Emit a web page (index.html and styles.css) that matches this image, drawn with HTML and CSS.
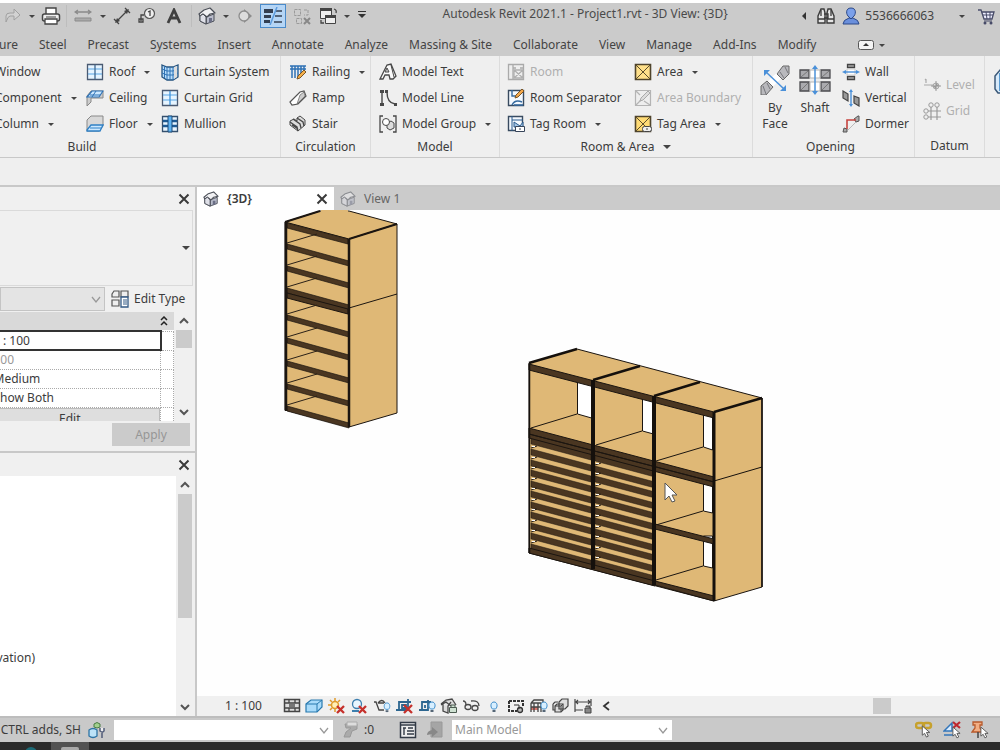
FILE: index.html
```html
<!DOCTYPE html>
<html lang="en">
<head>
<meta charset="utf-8">
<title>Autodesk Revit 2021.1 - Project1.rvt - 3D View: {3D}</title>
<link rel="stylesheet" href="styles.css">
</head>
<body>
<svg class="defs" aria-hidden="true">
  <defs>
    <symbol id="house" viewBox="0 0 18 18"><path d="M2 8v6l6 3V9zM8 10v7l8-3V7z" fill="#b9bccb" stroke="#4a4e57" stroke-linejoin="round"/><path d="m1 7 5-4 6-2 5 5-5 1-3 3-4-3-3 2z" fill="#f1f1f3" stroke="#4a4e57" stroke-width="1.200" stroke-linejoin="round"/><path d="m2 9 3-2 3 3v7l-6-3z" fill="#dfe0e8" stroke="#4a4e57"/><path d="M11 11h3v4l-3 1z" fill="#6b6f86"/></symbol>
    <symbol id="cross" viewBox="0 0 12 12"><path d="m1.500 1.500 9 9m0-9-9 9" stroke="#3a3a3a" stroke-width="2"/></symbol>
    <symbol id="up" viewBox="0 0 10 8"><path d="m1 6 4-4 4 4" fill="none" stroke="#555" stroke-width="2"/></symbol>
    <symbol id="down" viewBox="0 0 10 8"><path d="m1 2 4 4 4-4" fill="none" stroke="#555" stroke-width="2"/></symbol>
    <symbol id="thin-down" viewBox="0 0 12 8"><path d="m2 1 4 5 4-5" fill="none" stroke="#999" stroke-width="1.300"/></symbol>
    <symbol id="pointer" viewBox="0 0 10 14"><path d="M1 1v10l2.500-2 2 4 2-1-2-4H9z" fill="#fff" stroke="#555"/></symbol>
    <symbol id="bulb" viewBox="0 0 8 12"><path d="M2.500 8C0 6 .5 1 4 1s4 5 1.500 7z" fill="#d8efff" stroke="#3d8dcb"/><path d="M2.500 9h3v2h-3z" fill="#567"/></symbol>
    <g id="shelf"><path d="M0 0 62 17v5L0 5z" fill="#4a3621" stroke="#1b1510" stroke-width=".7"/><path d="m0-1 30-9" stroke="#2b2117" fill="none"/></g>
    <g id="slat"><path d="M0 0 60 16v6L0 6z" fill="#4a3621" stroke="#1b1510" stroke-width=".5"/><path d="m0-1 6-2" stroke="#2b2117" stroke-width="1.200"/><path d="M1-3h3v1H1z" fill="#fff"/></g>
  </defs>
</svg>

<div class="app">
  <div class="top-strip"></div>
  <header class="titlebar">
    <div class="quick-access">
      <button class="icon-btn" aria-label="Redo"><svg width="18" height="18" viewBox="0 0 18 18"><path d="M2 15V9q0-3 4-3h4V2l6 6-6 5V9H6q-2 0-4 6z" fill="#d2d2d2" stroke="#a0a0a0"/></svg></button>
      <button class="caret" aria-label="Redo list"></button>
      <button class="icon-btn" aria-label="Print"><svg width="20" height="18" viewBox="0 0 20 18"><path d="M5 7V1h10v6" fill="#fff" stroke="#444" stroke-width="1.400"/><rect x="1.500" y="7" width="17" height="7" rx="2" fill="#eee" stroke="#444" stroke-width="1.500"/><path d="M4 12h12v5H4z" fill="#fff" stroke="#444" stroke-width="1.300"/><path d="M5 10h10" stroke="#444"/></svg></button>
      <span class="divider"></span>
      <button class="icon-btn wide" aria-label="Measure"><svg width="18" height="16" viewBox="0 0 18 16"><path d="M2 4h14M4 2 1 4l3 2m10-4 3 2-3 2" fill="none" stroke="#8b8b8b" stroke-width="1.300"/><path d="M1 10h16v3H1z" fill="#aaa" stroke="#8b8b8b"/></svg></button>
      <button class="caret" aria-label="Measure list"></button>
      <button class="icon-btn" aria-label="Aligned dimension"><svg width="18" height="18" viewBox="0 0 18 18"><path d="m4 14 10-10M1 12l5 5M12 1l5 5" stroke="#444" stroke-width="1.300"/><path d="m2 16 2-5 3 3zm14-14-2 5-3-3z" fill="#444"/></svg></button>
      <button class="icon-btn" aria-label="Tag by category"><svg width="18" height="18" viewBox="0 0 18 18"><circle cx="11.500" cy="6.500" r="5" fill="#eee" stroke="#555" stroke-width="1.200"/><path d="M6 8H3v6M10 5l2-1v5M1 12h4v3H1z" fill="none" stroke="#444" stroke-width="1.300"/></svg></button>
      <button class="icon-btn text-tool" aria-label="Text"><svg width="16" height="16" viewBox="0 0 16 16"><path d="M2 15 8 2l6 13M4 10h8" fill="none" stroke="#404040" stroke-width="2.800"/></svg></button>
      <span class="divider"></span>
      <button class="icon-btn" aria-label="Default 3D view"><svg width="18" height="18"><use href="#house"/></svg></button>
      <button class="caret" aria-label="3D view list"></button>
      <button class="icon-btn" aria-label="Section"><svg width="16" height="16" viewBox="0 0 16 16"><path d="m7 1 8 7-8 7z" fill="#8d8d8d"/><circle cx="7" cy="8" r="5" fill="#ddd" stroke="#8d8d8d" stroke-width="1.300"/></svg></button>
      <button class="icon-btn active" aria-label="Thin lines"><svg width="20" height="18" viewBox="0 0 20 18"><path d="M1 2h9v4H1zm0 6h7v3H1zm0 5h6v3H1z" fill="#333f52"/><path d="M13 4h6M12 9h7m-8 6h8" stroke="#333f52" stroke-width="1.500"/><path d="M14 0 7 18" stroke="#5b9bdd" stroke-width="1.500"/></svg></button>
      <button class="icon-btn wide" aria-label="Close inactive views"><svg width="18" height="18" viewBox="0 0 18 18"><path d="M1.500 2.500h6v6h-6zm2 9h5v5h-5zM11 3h4v5h-4" fill="#ccc" stroke="#9a9a9a" stroke-dasharray="3 1"/><path d="m11 11 6 6m0-6-6 6" stroke="#888" stroke-width="2"/></svg></button>
      <button class="icon-btn" aria-label="Switch windows"><svg width="19" height="18" viewBox="0 0 19 18"><path d="M1.500 1.500h11v10h-11z" fill="#eee" stroke="#444"/><path d="M1 1h12v3H1z" fill="#444"/><path d="M6.500 8.500h10v8h-10z" fill="#eee" stroke="#444"/><path d="M6 8h11v3H6z" fill="#444"/><path d="M15 2q3 1 2 4M2 13v3h3" fill="none" stroke="#444" stroke-width="1.300"/></svg></button>
      <button class="caret" aria-label="Window list"></button>
      <button class="customize" aria-label="Customize Quick Access Toolbar"></button>
    </div>
    <h1 class="app-title">Autodesk Revit 2021.1 - Project1.rvt - 3D View: {3D}</h1>
    <div class="account">
      <button class="back" aria-label="Collapse search"></button>
      <button class="icon-btn" aria-label="Search"><svg width="18" height="18" viewBox="0 0 18 18"><path d="M1 16V9l3-7h3l1 4v10zm16 0V9l-3-7h-3l-1 4v10z" fill="#e5e5e5" stroke="#3b3b3b" stroke-width="1.400"/><path d="M7 7h4v4H7M1 12h7m2 0h7M4 3v6m10-6v6" fill="none" stroke="#3b3b3b" stroke-width="1.300"/></svg></button>
      <button class="user"><svg width="18" height="18" viewBox="0 0 18 18"><path d="M1 17q0-4 6-6h4q6 2 6 6z" fill="#6a8fdc" stroke="#2d4988"/><path d="M9 1c6 0 5 7 2 9l-2 2-2-2C4 8 3 1 9 1z" fill="#7ba0ea" stroke="#2d4988"/></svg><span>5536666063</span></button>
      <button class="caret" aria-label="Account menu"></button>
      <button class="icon-btn" aria-label="App store"><svg width="18" height="17" viewBox="0 0 18 17"><path d="M1 2h3l3 9h8l2-7H5" fill="#eef" stroke="#474b68" stroke-width="1.300"/><path d="M6 7h10M9 4l1 7m3-7v7M7 13h8" stroke="#474b68"/><circle cx="8" cy="15" r="1.500" fill="#474b68"/><circle cx="14" cy="15" r="1.500" fill="#474b68"/></svg></button>
    </div>
  </header>

  <nav class="ribbon-tabs">
    <a href="#" class="clipped">Structure</a><a href="#">Steel</a><a href="#">Precast</a><a href="#">Systems</a><a href="#">Insert</a><a href="#">Annotate</a><a href="#">Analyze</a><a href="#">Massing &amp; Site</a><a href="#">Collaborate</a><a href="#">View</a><a href="#">Manage</a><a href="#">Add-Ins</a><a href="#">Modify</a>
    <button class="ribbon-state" aria-label="Minimize ribbon"><svg width="16" height="10" viewBox="0 0 16 10"><rect x=".5" y=".5" width="15" height="9" rx="2" fill="#f4f4f4" stroke="#555"/><path d="m5 6 3-3 3 3z" fill="#333"/></svg><i class="tri"></i></button>
  </nav>

  <div class="ribbon">
    <section class="panel build">
      <div class="tools">
        <div class="col">
          <button class="tool"><span class="no-icon"></span>Window</button>
          <button class="tool"><span class="no-icon"></span>Component<i class="tri"></i></button>
          <button class="tool"><span class="no-icon"></span>Column<i class="tri"></i></button>
        </div>
        <div class="col">
          <button class="tool"><svg viewBox="0 0 18 18"><path d="M1.500 1.500h15v15h-15z" fill="#e6f4ff" stroke="#4a5a72" stroke-width="1.300"/><path d="M2 6h14M2 11h14" stroke="#58a5e4"/><path d="M9 2v14" stroke="#3e678f" stroke-width="1.300"/></svg>Roof<i class="tri"></i></button>
          <button class="tool"><svg viewBox="0 0 18 18"><path d="M1 7v10l4-4V9h12V2H5z" fill="#ccc" stroke="#888"/><path d="M1 8 6 2h11l-4 6z" fill="#cce8ff" stroke="#2f72b5" stroke-width="1.200"/><path d="M4 6h10M10 2 6 8" stroke="#2f72b5"/></svg>Ceiling</button>
          <button class="tool"><svg viewBox="0 0 18 18"><path d="M1 5 5 1h12v10l-4 5H1z" fill="#d8d8d8" stroke="#888"/><path d="m1 15 4-5h12l-3 6H1z" fill="#cce8ff" stroke="#2f80c5" stroke-width="1.300"/><path d="M4 13h11" stroke="#2f80c5"/></svg>Floor<i class="tri"></i></button>
        </div>
        <div class="col">
          <button class="tool"><svg viewBox="0 0 18 18"><path d="m1 2 5 2h6l5-2v12l-5 3H6l-5-3z" fill="#b8ddfa" stroke="#25537f" stroke-width="1.300"/><path d="M6 4v13m3-13v13m3-13v13M1 6l5 2h6l5-2M1 10l5 2h6l5-2M3.500 3v12" fill="none" stroke="#2f72b5"/><path d="m13 4 3-1v11l-3 2z" fill="#ddd"/></svg>Curtain System</button>
          <button class="tool"><svg viewBox="0 0 18 18"><path d="M1.500 1.500h15v15h-15z" fill="#e6f4ff" stroke="#4a5a72" stroke-width="1.300"/><path d="M2 6h14M2 11h14" stroke="#58a5e4"/><path d="M9 2v14" stroke="#3e91d8" stroke-width="1.300"/></svg>Curtain Grid</button>
          <button class="tool"><svg viewBox="0 0 18 18"><path d="M1.500 1.500h15v15h-15z" fill="#e6f4ff" stroke="#35506e" stroke-width="1.300"/><path d="M2 6h14m-14 5h14" stroke="#1d5a94" stroke-width="2.500"/><path d="M7 1h4v16H7z" fill="#5fb3f2" stroke="#1d4a78"/></svg>Mullion</button>
        </div>
      </div>
      <h2>Build</h2>
    </section>
    <section class="panel circulation">
      <div class="tools">
        <div class="col">
          <button class="tool"><svg viewBox="0 0 18 18"><path d="M1 3h16M1 6h16M3 3v12M6 3v12M9 3v11M12 3v8M15 3v5" stroke="#2f72b5" stroke-width="1.500"/><path d="m8 16 1-3 6-6 2 2-6 6z" fill="#f5b04c" stroke="#7a5526"/></svg>Railing<i class="tri"></i></button>
          <button class="tool"><svg viewBox="0 0 18 18"><path d="m1 13 10-10 4-1 2 5-8 8-6 1z" fill="#fff" stroke="#555" stroke-width="1.200"/><path d="m8 15 8-8-1-4-4 3z" fill="#ccc" stroke="#666" stroke-width=".7"/></svg>Ramp</button>
          <button class="tool"><svg viewBox="0 0 18 18"><path d="m1 6 4-2 3 2V3l3-2 5 4v5l-7 6-8-6z" fill="#ddd" stroke="#484848"/><path d="m1 7 7 5 1 4M4 4l7 5 1 4M8 3l6 4 1 4M3 10l6 4" fill="none" stroke="#484848" stroke-width="1.300"/></svg>Stair</button>
        </div>
      </div>
      <h2>Circulation</h2>
    </section>
    <section class="panel model">
      <div class="tools">
        <div class="col">
          <button class="tool"><svg viewBox="0 0 18 18"><path d="M1 16 8 2l4-1 5 12-3 3h-3l-1-4H6l-2 4z" fill="#fafafa" stroke="#484848" stroke-width="1.300"/><path d="m8 5 2 4H6zm4-3 3 12" fill="#ccc" stroke="#484848"/></svg>Model Text</button>
          <button class="tool"><svg viewBox="0 0 18 18"><path d="M3 3v12M8 3q0 11 8 12" fill="none" stroke="#484848" stroke-width="1.400"/><path d="M1 1h4v3H1zm0 13h4v3H1zM6 1h3v3H6zm9 13h3v3h-3z" fill="#484848"/></svg>Model Line</button>
          <button class="tool"><svg viewBox="0 0 18 18"><path d="M4 1H1v16h3M14 1h3v16h-3" fill="none" stroke="#484848" stroke-width="1.300"/><path d="m8 8 4-2 3 2v5l-4 2-3-2z" fill="#ddd" stroke="#484848"/><circle cx="7" cy="7" r="3.500" fill="#fff" stroke="#484848"/></svg>Model Group<i class="tri"></i></button>
        </div>
      </div>
      <h2>Model</h2>
    </section>
    <section class="panel room">
      <div class="tools">
        <div class="col">
          <button class="tool" disabled><svg viewBox="0 0 18 18"><path d="M1.500 1.500h15v15h-15zM6 2v14M6 5h3m4 0h4" fill="#eee" stroke="#aaa" stroke-width="1.300"/><path d="m7 7 9 8m0-8-9 8M7 7h9v8H7z" fill="none" stroke="#b0b0b0" stroke-width="1.300"/></svg>Room</button>
          <button class="tool"><svg viewBox="0 0 18 18"><path d="M1.500 1.500h15v15h-15z" fill="#f4f9ff" stroke="#394b60" stroke-width="1.400"/><path d="M5 1v6h5m-5 9q3-6 10-3m-8 3h9" fill="none" stroke="#356a9e" stroke-width="1.400"/><path d="m8 9 1-3 6-6 2 2-6 6z" fill="#f5a94c" stroke="#7a5526"/></svg>Room Separator</button>
          <button class="tool"><svg viewBox="0 0 18 18"><path d="M1.500 1.500h14v14h-14z" fill="#f4f9ff" stroke="#394b60" stroke-width="1.400"/><path d="M5 1v15M5 5h11M7 7l6 4 3-4v5H7z" fill="#a6c8e8" stroke="#2a5a8c"/><path d="M8.500 11.500h9v5h-9z" fill="#fff" stroke="#38455a"/><path d="M13 13v2" stroke="#38455a"/></svg>Tag Room<i class="tri"></i></button>
        </div>
        <div class="col">
          <button class="tool"><svg viewBox="0 0 18 18"><path d="M1.500 1.500h15v15h-15z" fill="#ffe08a" stroke="#4f442c" stroke-width="1.600"/><path d="m2 2 14 14M16 2 2 16" stroke="#5c4e2c"/></svg>Area<i class="tri"></i></button>
          <button class="tool" disabled><svg viewBox="0 0 18 18"><path d="M1.500 1.500h15v15h-15zM2 2l4 4m-4 10 6-6m2 2 6 4" fill="#eee" stroke="#b4b4b4" stroke-width="1.200"/><path d="m6 12 1-3 7-7 2 2-7 7z" fill="#ddd" stroke="#aaa"/></svg>Area Boundary</button>
          <button class="tool"><svg viewBox="0 0 18 18"><path d="M1.500 1.500h15v15h-15z" fill="#ffdb75" stroke="#4f442c" stroke-width="1.600"/><path d="m2 2 14 14M16 2 2 16" stroke="#5c4e2c"/><rect x="8.500" y="11.500" width="9" height="5" rx="2" fill="#eee" stroke="#444"/><path d="M13 13v2" stroke="#444"/></svg>Tag Area<i class="tri"></i></button>
        </div>
      </div>
      <h2>Room &amp; Area<i class="tri large"></i></h2>
    </section>
    <section class="panel opening">
      <div class="tools">
        <button class="big-tool"><svg viewBox="0 0 30 30"><path d="m10 14 10-9 5 5-15 14-5-4z" fill="#fff"/><path d="M1 30V21l6-5 6 6-7 8zM29 1v8l-6 6-6-6 6-8z" fill="#b9b9bd" stroke="#666"/><path d="m3 21 3 8m1-11 3 6m10-17 4 6m1-11 3 6" stroke="#77777c"/><path d="m6 7 18 17" stroke="#4a90d9" stroke-width="1.500"/><path d="M4 5h6L4 11zm22 21v-6l-6 6z" fill="#4a90d9"/></svg>By<br>Face</button>
        <button class="big-tool"><svg viewBox="0 0 32 30"><path d="M1 5h9v8H1zm21 0h9v8h-9zM1 17h9v9H1zm21 0h9v9h-9z" fill="#aaaaae" stroke="#4b4b4f" stroke-width="1.300"/><path d="M11 5h10v8H11zm0 12h10v9H11z" fill="#fff" stroke="#b5b5b5"/><path d="m2 12 7-6m-7 19 7-7m14-6 7-6m-7 19 7-7" stroke="#777"/><path d="M16 2v26" stroke="#4a90d9" stroke-width="1.500"/><path d="m13 4 3-4 3 4zm0 22 3 4 3-4z" fill="#4a90d9"/></svg>Shaft</button>
        <div class="col">
          <button class="tool"><svg viewBox="0 0 18 18"><path d="M5.500 1.500h7v3h-7zm0 12h7v3h-7z" fill="#aaa" stroke="#444" stroke-width="1.300"/><path d="M5 6h8v6H5z" fill="#fff" stroke="#ccc"/><path d="M2 9h14" stroke="#4a90d9" stroke-width="1.400"/><path d="M0 9 4 7v4zm18 0-4-2v4z" fill="#4a90d9"/></svg>Wall</button>
          <button class="tool"><svg viewBox="0 0 18 18"><path d="m1 2 5 3v7L1 9zm11 5 5 2v8l-5-3z" fill="#999" stroke="#444" stroke-width="1.200"/><path d="M9 2v14" stroke="#4a90d9" stroke-width="1.400"/><path d="m7 3 2-3 2 3zm0 12 2 3 2-3z" fill="#4a90d9"/></svg>Vertical</button>
          <button class="tool"><svg viewBox="0 0 18 18"><path d="m1 17 1-4 3 1v3zM12 4l4-3h1v5l-3 1z" fill="#aaa" stroke="#555"/><path d="M5 14V5h9" fill="none" stroke="#c6443f" stroke-width="1.600"/><path d="m6 15 8-8" stroke="#bbb"/></svg>Dormer</button>
        </div>
      </div>
      <h2>Opening</h2>
    </section>
    <section class="panel datum">
      <div class="tools">
        <div class="col">
          <button class="tool" disabled><svg viewBox="0 0 18 18"><path d="M1 9h9M3 3v4M2 4l1-1" stroke="#aaa" stroke-width="1.200"/><circle cx="13" cy="10" r="3" fill="#ddd" stroke="#aaa"/><path d="M13 5v10M8 10h10" stroke="#999"/><path d="M13 7v3h3zm0 6v-3h-3z" fill="#999"/></svg>Level</button>
          <button class="tool" disabled><svg viewBox="0 0 18 18"><circle cx="8" cy="3" r="2.200" fill="none" stroke="#999"/><circle cx="14" cy="3" r="2.200" fill="none" stroke="#999"/><circle cx="3" cy="9" r="2.200" fill="none" stroke="#999"/><circle cx="3" cy="15" r="2.200" fill="none" stroke="#999"/><path d="M8 5v13m6-13v13M5 9h13M5 15h13" stroke="#999" stroke-width="1.200"/></svg>Grid</button>
        </div>
      </div>
      <h2>Datum</h2>
    </section>
    <section class="panel workplane">
      <div class="tools">
        <button class="big-tool"><svg viewBox="0 0 30 30"><path d="m1 11 6-7h20v20l-7 4H4l-3-4z" fill="#d8eafa" stroke="#3b5878" stroke-width="1.500"/><path d="M6 8v18M11 4v20M6 14h18" stroke="#2f80c5" stroke-width="1.500"/></svg>Set</button>
      </div>
    </section>
  </div>
  <div class="options-bar"></div>

  <main class="workspace">
    <aside class="docks">
      <section class="dock properties">
        <div class="dock-head"><button aria-label="Close properties"><svg width="12" height="12"><use href="#cross"/></svg></button></div>
        <button class="type-selector" aria-label="Type selector"><i class="tri large"></i></button>
        <div class="type-row">
          <div class="select-wrap filter"><select aria-label="Category filter"><option></option></select><svg width="12" height="8"><use href="#thin-down"/></svg></div>
          <button class="edit-type"><svg width="18" height="18" viewBox="0 0 18 18"><path d="m1 4 2-3h5v6H1zm9-3h7v6h-7zM1 10h7v6H1z" fill="#eee" stroke="#555" stroke-width="1.200"/><path d="M10 7h7v10h-7z" fill="#fff" stroke="#345a85" stroke-width="1.300"/><path d="M12 10h4m-4 2h4m-4 2h4" stroke="#345a85"/></svg>Edit Type</button>
        </div>
        <div class="prop-area">
          <div class="prop-scroll">
            <div class="group-head"><svg width="8" height="10" viewBox="0 0 8 10"><path d="m1 4 3-3 3 3M1 9l3-3 3 3" fill="none" stroke="#222" stroke-width="1.500"/></svg></div>
            <table>
              <tr><td class="editing"><input aria-label="View scale" value="1 : 100"></td><td></td></tr>
              <tr><td class="dim">100</td><td></td></tr>
              <tr><td>Medium</td><td></td></tr>
              <tr><td>Show Both</td><td></td></tr>
              <tr><td class="edit-cell"><button>Edit</button></td><td></td></tr>
            </table>
          </div>
          <div class="scroll"><svg width="10" height="8"><use href="#up"/></svg><i class="thumb short"></i><svg class="last" width="10" height="8"><use href="#down"/></svg></div>
        </div>
        <div class="apply-row"><button disabled>Apply</button></div>
      </section>
      <section class="dock browser">
        <div class="dock-head"><button aria-label="Close project browser"><svg width="12" height="12"><use href="#cross"/></svg></button></div>
        <div class="tree-area">
          <div class="tree"><span>Elevations (Building Elevation)</span></div>
          <div class="scroll"><svg width="10" height="8"><use href="#up"/></svg><i class="thumb tall"></i><svg class="last" width="10" height="8"><use href="#down"/></svg></div>
        </div>
      </section>
    </aside>

    <section class="view">
      <div class="view-tabs">
        <div class="view-tab current"><svg width="16" height="16"><use href="#house"/></svg><span>{3D}</span><button aria-label="Close view"><svg width="12" height="12"><use href="#cross"/></svg></button></div>
        <div class="view-tab"><svg class="faded" width="16" height="16"><use href="#house"/></svg><span>View 1</span></div>
      </div>
      <svg class="canvas" viewBox="198 210 803 486" preserveAspectRatio="xMinYMin slice" role="img" aria-label="3D view of two shelving units">
        <g stroke-linejoin="round" stroke="#1b1510">
          <path d="m286 222 35-11h29l48 13v189l-48 14-64-17z" fill="#dfb876"/>
          <path d="m286 222 64 17 48-15M350 308l48-14" fill="none"/>
          <path d="m286 222 35-11M350 239l48-15" stroke-width="2" fill="none"/>
        </g>
        <path d="M322 210h27v2h-27z" fill="#dfb876"/>
        <path d="m288 223 61 16v5l-61-16z" fill="#4a3621" stroke="#1b1510" stroke-width=".7"/>
        <use href="#shelf" x="288" y="244"/><use href="#shelf" x="288" y="266"/><use href="#shelf" x="288" y="288"/>
        <path d="m288 293 61 16v5l-61-16z" fill="#4a3621" stroke="#1b1510"/>
        <use href="#shelf" x="288" y="315"/><use href="#shelf" x="288" y="338"/><use href="#shelf" x="288" y="361"/><use href="#shelf" x="288" y="384"/><use href="#shelf" x="288" y="406"/>
        <path d="M287 222v189M350 239v188" stroke="#1b1510" stroke-width="2.500"/>

        <path d="m530 363 48-14 185 49v189l-48 14-185-48z" fill="#dfb876" stroke="#1b1510" stroke-linejoin="round"/>
        <g fill="#fff" stroke="#1b1510">
          <path d="M578.500 378v36l14 4v-36zM643.500 395v36l11 3v-36zM704.500 411v36l9 3v-36zM704.500 480v31l9 2v-32zM704.500 536v30l9 2v-32z"/>
          <path d="m532 428 46-14M597 445l46-14M657 461l47-14M657 525l47-14M657 580l47-14" fill="none"/>
        </g>
        <use href="#slat" x="532" y="438"/><use href="#slat" x="532" y="449"/><use href="#slat" x="532" y="460"/><use href="#slat" x="532" y="470"/><use href="#slat" x="532" y="481"/><use href="#slat" x="532" y="491"/><use href="#slat" x="532" y="502"/><use href="#slat" x="532" y="512"/><use href="#slat" x="532" y="523"/><use href="#slat" x="532" y="533"/><use href="#slat" x="532" y="544"/>
        <use href="#slat" x="596" y="455"/><use href="#slat" x="596" y="466"/><use href="#slat" x="596" y="476"/><use href="#slat" x="596" y="487"/><use href="#slat" x="596" y="497"/><use href="#slat" x="596" y="508"/><use href="#slat" x="596" y="518"/><use href="#slat" x="596" y="529"/><use href="#slat" x="596" y="539"/><use href="#slat" x="596" y="550"/><use href="#slat" x="596" y="560"/>
        <g fill="#4a3621" stroke="#1b1510" stroke-linejoin="round">
          <path d="m530 364 185 48v6l-185-48zM530 428l185 49v5l-185-48zM530 434l185 48v5l-185-49zM656 524l59 15v5l-59-15zM656 581l59 15v5l-59-16z"/>
          <path d="m530 548 126 33v5l-126-33z"/>
        </g>
        <g fill="none" stroke="#15100c">
          <path d="M530.500 363v190M763 398v189" stroke-width="1.500"/>
          <path d="M594 380v189M655 396v189" stroke-width="4"/>
          <path d="M715 412v189" stroke-width="3"/>
          <path d="m530 363 48-14M594 380l47-14M655 396l46-14M715 412l48-14" stroke-width="2.500"/>
          <path d="m715 481 48-14"/>
        </g>
        <path d="M666 483v17l4-4 3 6 3-1-3-6h5z" fill="#fff" stroke="#555"/>
      </svg>
      <div class="view-control">
        <button class="scale">1 : 100</button>
        <div class="view-icons">
          <button aria-label="Detail level"><svg viewBox="0 0 18 16"><path d="M1.500 1.500h15v12h-15z" fill="#ddd" stroke="#444" stroke-width="1.500"/><path d="M2 5h14M2 10h14M6 2v3m6-3v3M6 10v3m6-3v3" stroke="#444" stroke-width="1.300"/><path d="M6 6h6v3H6z" fill="#777"/></svg></button>
          <button aria-label="Visual style"><svg viewBox="0 0 18 16"><path d="m1 6 5-4h11v7l-5 5H1z" fill="#a9dbfa" stroke="#2778ae" stroke-width="1.200"/><path d="M1 6h11v8m0-8 5-4" fill="none" stroke="#2778ae"/></svg></button>
          <button aria-label="Sun path"><svg viewBox="0 0 18 16"><circle cx="7" cy="7" r="3.500" fill="#fff0b5" stroke="#e09a2c" stroke-width="1.500"/><path d="M7 0v3m0 8v3M0 7h3M2 2l2 2m6 0 2-2M2 12l2-2" stroke="#e09a2c" stroke-width="1.500"/><path d="m9 8 7 7m0-7-7 7" stroke="#c5302b" stroke-width="2.300"/></svg></button>
          <button aria-label="Shadows"><svg viewBox="0 0 18 16"><circle cx="7" cy="6" r="4.500" fill="#e8f6ff" stroke="#3c7eae" stroke-width="1.300"/><path d="M2 13h7" stroke="#3c7eae" stroke-width="2"/><path d="m9 8 7 7m0-7-7 7" stroke="#c5302b" stroke-width="2.300"/></svg></button>
          <button aria-label="Rendering"><svg viewBox="0 0 18 16"><path d="M1 4h2l3 8h5M5 5q4-5 7 0M5 5h6" fill="none" stroke="#444" stroke-width="1.300"/><use href="#bulb" x="10" y="4" width="8" height="11"/></svg></button>
          <button aria-label="Crop view"><svg viewBox="0 0 18 16"><path d="M1 12h3V4h12M4 12h9V1M7 7h4v3H7z" fill="none" stroke="#2d6690" stroke-width="1.800"/><path d="m9 7 8 8m0-8-8 8" stroke="#c5302b" stroke-width="2.300"/></svg></button>
          <button aria-label="Show crop region"><svg viewBox="0 0 18 16"><path d="M1 12h3V4h9M4 12h6V2M7 7v3" fill="none" stroke="#2d6690" stroke-width="1.800"/><use href="#bulb" x="10" y="3" width="8" height="12"/></svg></button>
          <button aria-label="Lock view"><svg viewBox="0 0 18 16"><path d="m1 6 5-4 6-1 4 6M3 6v7l5 2V8l3-4M1 7l5-3 5 4" fill="#ddd" stroke="#484848" stroke-width="1.300"/><path d="M9.500 9.500h7v5h-7zM11 9V7h4v2" fill="#cee1d2" stroke="#4b5b50"/></svg></button>
          <button aria-label="Temporary hide"><svg viewBox="0 0 18 16"><path d="M1 3q3 0 3 4m5-4q8-1 8 5" fill="none" stroke="#484848" stroke-width="1.300"/><ellipse cx="6" cy="9" rx="3" ry="2.500" fill="#eee" stroke="#484848" stroke-width="1.300"/><ellipse cx="13" cy="10" rx="3" ry="2.500" fill="#eee" stroke="#484848" stroke-width="1.300"/></svg></button>
          <button aria-label="Reveal hidden"><svg viewBox="0 0 18 16"><use href="#bulb" x="5" y="3" width="8" height="12"/></svg></button>
          <button aria-label="Temporary view properties"><svg viewBox="0 0 18 16"><path d="M2 3h14v5M2 3v10h8" fill="none" stroke="#333" stroke-width="2" stroke-dasharray="3 1"/><circle cx="13" cy="12" r="2.500" fill="#bbb" stroke="#333" stroke-width="1.300"/><path d="M7 7h5v4" fill="none" stroke="#333"/></svg></button>
          <button aria-label="Analytical model"><svg viewBox="0 0 18 16"><path d="M1 9h7v3H1z" fill="#d8746c"/><path d="m1 5 3-3h9v5M1 5h10v9M1 5v9m3-9v9m4-9v9M1 9h12" fill="none" stroke="#444" stroke-width="1.300"/><use href="#bulb" x="10" y="3" width="8" height="12"/></svg></button>
          <button aria-label="Displacement sets"><svg viewBox="0 0 18 16"><path d="m7 4 3-3h6v7l-3 3H7zM1 6l2-2h3M3 8l2-2h6v6l-2 2H3zM1 6v6h2" fill="#ddd" stroke="#444" stroke-width="1.200"/><path d="M3 8h6v6m0-6 2-2" fill="none" stroke="#444"/></svg></button>
          <button aria-label="Constraints"><svg viewBox="0 0 18 16"><path d="M1 1v13M17 1v7M2 4h14M4 2 2 4l2 2m10-4 2 2-2 2M1 12h8" fill="none" stroke="#444" stroke-width="1.200"/><path d="M11 10h6v5h-6zM12 9V8h4v2" fill="#888" stroke="#444"/></svg></button>
          <button aria-label="Collapse"><svg viewBox="0 0 18 16"><path d="m12 4-5 4 5 4" fill="none" stroke="#333" stroke-width="1.800"/></svg></button>
        </div>
        <div class="hscroll"><i></i></div>
      </div>
    </section>
  </main>

  <footer class="status">
    <span class="hint">Click to select, TAB for alternates, CTRL adds, SHIFT</span>
    <svg class="ws-icon" width="18" height="18" viewBox="0 0 18 18"><path d="M6 3q3-3 6 0v3l-3 1-3-1z" fill="#a2d08d" stroke="#497a42"/><path d="M1 9q4-3 8 0v6q-4 3-8 0z" fill="#bce3f8" stroke="#2d74a5" stroke-width="1.300"/><path d="M12 7v3q3 2 4 0V7M14 11v6" fill="#eee" stroke="#505b78" stroke-width="1.500"/></svg>
    <div class="select-wrap worksets"><select aria-label="Active workset"><option></option></select><svg width="12" height="8"><use href="#thin-down"/></svg></div>
    <svg class="paint" width="18" height="18" viewBox="0 0 18 18"><path d="M3 3h12v5l-5 2-2 6H2l2-5 5-4H4z" fill="#aaa" stroke="#999"/><path d="M5 1h10v4H5z" fill="#ddd" stroke="#aaa"/></svg>
    <span class="count">:0</span>
    <button class="icon-btn options" aria-label="Design options"><svg width="18" height="18" viewBox="0 0 18 18"><path d="M1.500 1.500h15v15h-15z" fill="#eee" stroke="#333b47" stroke-width="1.500"/><path d="M1 4h16M4 7h3m1 3h7m-7 3h7M5 7v7M9 7h5" stroke="#333b47" stroke-width="1.400"/></svg></button>
    <svg class="add-set" width="18" height="18" viewBox="0 0 18 18"><path d="M5 1h11v15H5z" fill="#a5a5a5" stroke="#999"/><path d="M1 14q0-4 5-5V6l6 5-6 5v-3z" fill="#888"/></svg>
    <div class="select-wrap main-model"><select aria-label="Design option"><option>Main Model</option></select><svg width="12" height="8"><use href="#thin-down"/></svg></div>
    <div class="select-tools">
      <button class="icon-btn" aria-label="Select links"><svg width="18" height="18" viewBox="0 0 18 18"><rect x="1" y="2" width="8" height="5" rx="2.500" fill="none" stroke="#c6a12d" stroke-width="2.500"/><rect x="8" y="2" width="8" height="5" rx="2.500" fill="none" stroke="#c6a12d" stroke-width="2.500"/><use href="#pointer" x="6" y="4" width="10" height="13"/></svg></button>
      <button class="icon-btn" aria-label="Select underlay"><svg width="18" height="18" viewBox="0 0 18 18"><path d="m1 10 8-8v8zm0 4h10" fill="#d8ecff" stroke="#3476b9" stroke-width="1.500"/><path d="m10 1 7 6m0-6-7 6" stroke="#bd2830" stroke-width="2.200"/><use href="#pointer" x="9" y="5" width="9" height="13"/></svg></button>
      <button class="icon-btn" aria-label="Select pinned"><svg width="18" height="18" viewBox="0 0 18 18"><path d="M2 1h9v3H9v3l3 4H1l3-4V4H2z" fill="#f2ae83" stroke="#b85a2c" stroke-width="1.300"/><path d="M7 11v6" stroke="#444" stroke-width="1.500"/><use href="#pointer" x="9" y="5" width="9" height="13"/></svg></button>
    </div>
  </footer>
  <div class="taskbar"><i class="dot"></i><span class="task"><i></i></span></div>
</div>
</body>
</html>
```

FILE: styles.css
```css
* { box-sizing: border-box; }
body {
  margin: 0;
  font-family: "Noto Sans", "Open Sans", sans-serif;
  font-size: 12px;
  line-height: 16px;
  color: #3c3c3c;
  background: #efefef;
}
button, input, select { font: inherit; color: inherit; }
button { background: none; border: 0; padding: 0; white-space: nowrap; }
svg { display: block; flex: none; }
.defs { position: absolute; width: 0; height: 0; }

.app { height: 100vh; display: flex; flex-direction: column; overflow: hidden; }
.top-strip { height: 3px; flex: none; background: #fff; }

.tri, .caret::before {
  content: "";
  display: block;
  flex: none;
  width: 0;
  height: 0;
  border: 3px solid transparent;
  border-top-color: #444;
  border-bottom: 0;
}
.tri.large { border-width: 4px 4px 0; }

/* Title bar */
.titlebar { flex: none; height: 31px; display: flex; align-items: flex-start; background: #cbcbcb; }
.quick-access { display: flex; align-items: center; gap: 5px; height: 26px; padding-left: 3px; }
.icon-btn { width: 20px; height: 24px; display: flex; align-items: center; justify-content: center; flex: none; }
.icon-btn.wide { width: 22px; }
.icon-btn.text-tool { width: 24px; }
.icon-btn.active { width: 26px; background: #b5d5f5; border: 1px solid #4a8ac9; }
.caret { width: 8px; height: 20px; display: flex; align-items: center; justify-content: center; }
.divider { width: 1px; height: 22px; background: #bdbdbd; }
.customize { width: 12px; height: 10px; display: flex; flex-direction: column; align-items: center; gap: 2px; }
.customize::before { content: ""; width: 8px; height: 1px; background: #333; }
.customize::after { content: ""; border: 4px solid transparent; border-top-color: #333; border-bottom: 0; }
.app-title { flex: 1; margin: 0; padding-top: 3px; font-size: 12px; font-weight: 400; text-align: center; white-space: nowrap; color: #4a4a4a; }
.account { display: flex; align-items: center; height: 26px; padding-right: 4px; }
.back { width: 4px; height: 8px; border: 4px solid transparent; border-right-color: #333; border-left: 0; margin-right: 10px; }
.user { display: flex; align-items: center; gap: 5px; margin: 0 24px 0 6px; color: #444; }
.account .icon-btn:last-child { margin-left: 10px; }

/* Ribbon */
.ribbon-tabs { flex: none; height: 22px; display: flex; align-items: center; gap: 21px; background: #cbcbcb; white-space: nowrap; overflow: hidden; }
.ribbon-tabs a { color: #444; text-decoration: none; }
.ribbon-tabs .clipped { width: 18px; display: flex; justify-content: flex-end; }
.ribbon-state { display: flex; align-items: center; gap: 5px; margin-left: 20px; }
.ribbon { flex: none; display: flex; height: 102px; border-bottom: 1px solid #c8c8c8; background: #efefef; overflow: hidden; }
.panel { flex: none; display: flex; flex-direction: column; border-right: 1px solid #dcdcdc; padding: 3px 0 0 8px; }
.panel h2 { display: flex; align-items: center; justify-content: center; gap: 8px; margin: 0 8px 0 0; height: 22px; font-size: 12px; font-weight: 400; }
.tools { display: flex; height: 77px; }
.tool { display: flex; align-items: center; gap: 5px; height: 26px; }
.tool svg, .no-icon { width: 18px; height: 18px; flex: none; }
.tool .tri { margin-left: 4px; }
.tool:disabled { color: #b0b0b0; }
.build { width: 317px; margin-left: -36px; }
.build .col:nth-child(1) { width: 114px; }
.build .col:nth-child(2) { width: 75px; }
.panel.build h2 { margin-right: 88px; }
.circulation { width: 90px; }
.model { width: 129px; }
.room { width: 253px; padding-left: 7px; }
.room .col:first-child { width: 127px; }
.opening { width: 162px; padding-left: 2px; }
.big-tool { width: 40px; display: flex; flex-direction: column; align-items: center; gap: 5px; padding-top: 6px; }
.big-tool svg { width: 32px; height: 30px; }
.opening .col { padding-left: 7px; }
.datum { width: 70px; }
.datum .col { padding-top: 13px; }
.workplane { width: 60px; padding-left: 4px; }
.options-bar { flex: none; height: 29px; border-bottom: 2px solid #c8c8c8; background: #efefef; }

/* Docked palettes */
.workspace { flex: 1; min-height: 0; display: flex; }
.docks { width: 197px; flex: none; display: flex; flex-direction: column; border-right: 2px solid #c8c8c8; background: #f0f0f0; overflow: hidden; }
.dock-head { height: 23px; display: flex; align-items: center; justify-content: flex-end; padding-right: 5px; flex: none; }
.properties { flex: none; border-bottom: 2px solid #c8c8c8; padding-bottom: 5px; }
.type-selector { width: 193px; height: 76px; display: flex; align-items: center; justify-content: flex-end; padding-right: 2px; border: 1px solid #dadada; border-left: 0; }
.type-row { display: flex; align-items: center; height: 25px; }
.select-wrap { position: relative; }
.select-wrap select { appearance: none; display: block; width: 100%; height: 100%; border: 0; border-radius: 0; background: #fff; padding: 0 4px 0 3px; }
.select-wrap svg { position: absolute; right: 3px; top: 50%; margin-top: -3px; pointer-events: none; }
.filter { width: 105px; height: 24px; }
.filter select { background: #e4e4e4; border: 1px solid #c4c4c4; }
.edit-type { display: flex; align-items: center; gap: 5px; padding-left: 6px; }
.prop-area { display: flex; height: 109px; margin-top: 1px; }
.prop-scroll { width: 174px; overflow: hidden; background: #fff; }
.group-head { height: 18px; display: flex; align-items: center; justify-content: flex-end; padding-right: 6px; background: #d9d9d9; }
table { width: 184px; margin-left: -10px; border-collapse: collapse; table-layout: fixed; }
td { height: 19px; padding: 0 0 0 2px; line-height: 16px; border: 1px dotted #aaa; }
td:last-child { width: 13px; }
td.dim { color: #999; }
td.editing { padding: 0; border: 2px solid #333; }
td input { display: block; width: 100%; height: 16px; border: 0; padding: 0 0 0 1px; outline: 0; }
td.edit-cell { padding: 0; }
td.edit-cell button { display: block; width: 100%; height: 20px; padding: 2px 12px 0 0; background: #dedede; border: 1px solid #bbb; }
.scroll { flex: 1; display: flex; flex-direction: column; align-items: center; padding: 5px 3px 5px 2px; }
.scroll .last { margin-top: auto; }
.thumb { width: 100%; background: #cbcbcb; margin-top: 5px; }
.thumb.short { height: 18px; }
.thumb.tall { height: 124px; }
.apply-row { display: flex; justify-content: flex-end; padding: 2px 5px 0 0; }
.apply-row button { width: 78px; height: 23px; background: #cbcbcb; color: #969696; }
.browser { flex: 1; min-height: 0; display: flex; flex-direction: column; }
.tree-area { flex: 1; min-height: 0; display: flex; }
.tree { width: 176px; background: #fff; display: flex; flex-direction: column; justify-content: flex-end; padding-bottom: 50px; overflow: hidden; }
.tree span { width: 35px; align-self: flex-start; display: flex; justify-content: flex-end; white-space: nowrap; }

/* View window */
.view { flex: 1; min-width: 0; display: flex; flex-direction: column; background: #fff; }
.view-tabs { flex: none; height: 23px; display: flex; background: #cbcbcb; }
.view-tab { display: flex; align-items: center; gap: 8px; padding: 0 6px; color: #666; }
.view-tab.current { width: 137px; background: #fff; color: #3c3c3c; font-weight: 600; }
.view-tab button { margin-left: auto; }
.faded { opacity: .5; }
.canvas { flex: 1; min-height: 0; width: 100%; background: #fefefe; }
.view-control { flex: none; height: 20px; display: flex; align-items: center; background: #f0f0f0; }
.scale { width: 60px; padding-left: 28px; margin-right: 26px; text-align: left; }
.view-icons { flex: none; width: 332px; display: flex; justify-content: space-between; }
.view-icons svg { width: 18px; height: 16px; }
.hscroll { flex: 1; display: flex; justify-content: flex-end; padding-right: 109px; }
.hscroll i { width: 18px; height: 16px; background: #cbcbcb; }

/* Status bar */
.status { flex: none; height: 26px; display: flex; align-items: center; border-top: 2px solid #bdbdbd; background: #c9c9c9; }
.hint { width: 81px; height: 16px; overflow: hidden; white-space: nowrap; text-indent: -189px; }
.ws-icon { margin-left: 7px; }
.select-wrap.worksets { width: 219px; height: 20px; margin-left: 8px; }
.select-wrap.main-model { width: 220px; height: 20px; margin-left: 8px; }
.main-model select { color: #999; }
.paint { margin-left: 9px; }
.count { margin-left: 4px; width: 34px; }
.add-set { margin-left: 8px; }
.select-tools { flex: 1; display: flex; justify-content: flex-end; gap: 8px; padding-right: 10px; }
.taskbar { flex: none; height: 8px; display: flex; background: #2b2b2b; overflow: hidden; }
.dot { width: 12px; height: 12px; margin: 5px 8px 0 25px; border-radius: 6px; background: #1c6b77; }
.task { width: 38px; margin-left: 6px; display: flex; justify-content: center; background: #525252; }
.task i { width: 18px; height: 4px; margin-top: 5px; background: #aaa; border-radius: 2px; }
```
